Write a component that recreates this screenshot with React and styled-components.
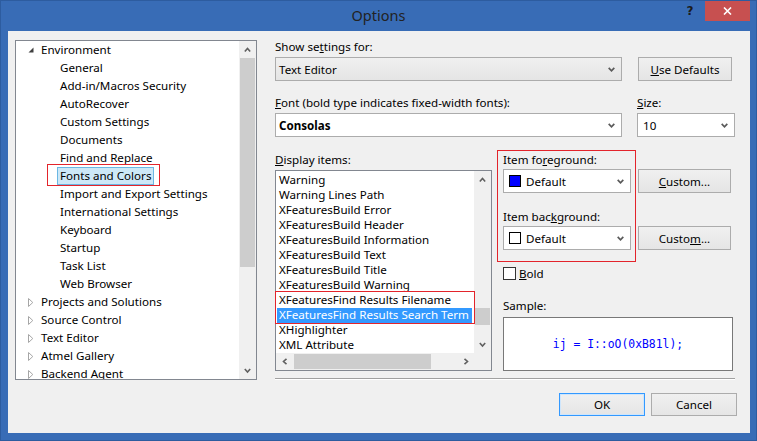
import React from 'react';
import styled, { createGlobalStyle } from 'styled-components';

const GlobalStyle = createGlobalStyle`
  html, body { margin: 0; padding: 0; background: #386cb6; }
  body { font-family: "Noto Sans", "Open Sans", sans-serif; font-size: 11.6px; color: #000; }
  * { box-sizing: border-box; }
`;

const Window = styled.div`
  width: 757px;
  height: 441px;
  background: #386cb6;
  border: 1px solid #2d5c9f;
  display: flex;
  flex-direction: column;
`;

const TitleBar = styled.div`
  height: 30px;
  display: grid;
  grid-template-columns: 1fr auto 1fr;
  align-items: start;
`;

const Title = styled.div`
  grid-column: 2;
  font-size: 14.5px;
  line-height: 28px;
  color: #222;
`;

const TitleControls = styled.div`
  grid-column: 3;
  display: flex;
  justify-content: flex-end;
  align-items: flex-start;
`;

const HelpGlyph = styled.div`
  width: 14px;
  height: 21px;
  line-height: 21px;
  text-align: center;
  font-family: "DejaVu Sans", sans-serif;
  font-weight: bold;
  font-size: 12px;
  color: #1c1c1c;
  margin-right: 8px;
`;

const CloseButton = styled.div`
  width: 45px;
  height: 20px;
  margin-right: 6px;
  background: #c75050;
  display: flex;
  align-items: center;
  justify-content: center;
`;

const Client = styled.div`
  flex: 1;
  margin: 0 6px 7px 7px;
  background: #f0f0f0;
  display: flex;
  align-items: flex-start;
  padding: 8px 0 0 7px;
`;

/* ---------- Tree ---------- */
const TreeBox = styled.div`
  margin-top: 1px;
  width: 242px;
  height: 340px;
  border: 1px solid #828790;
  background: #fff;
  display: flex;
`;

const TreeContent = styled.div`
  flex: 1;
  overflow: hidden;
  position: relative;
`;

const TreeRow = styled.div`
  height: 18px;
  display: flex;
  align-items: center;
  padding-left: ${p => (p.$level ? 41 : 10)}px;
  white-space: nowrap;
`;

const Expander = styled.span`
  width: 12px;
  height: 18px;
  display: flex;
  align-items: center;
  padding-left: 2px;
`;

const TreeLabel = styled.span`
  position: relative;
  height: 18px;
  line-height: 16px;
  padding: 0 2px;
  border: 1px solid ${p => (p.$selected ? '#6bb7e3' : 'transparent')};
  background: ${p => (p.$selected ? '#cde8f7' : 'transparent')};
  ${p => p.$annotated && `
    &::after {
      content: '';
      position: absolute;
      top: -4px; bottom: -2px; left: -11px; right: -7px;
      border: 1px solid #e3242b;
    }
  `}
`;

/* ---------- Scrollbars ---------- */
const VScroll = styled.div`
  width: 17px;
  background: #f0f0f0;
  display: flex;
  flex-direction: column;
`;

const HScroll = styled.div`
  height: 17px;
  background: #f0f0f0;
  display: flex;
`;

const ArrowCell = styled.div`
  width: 17px;
  height: 17px;
  flex: none;
  display: flex;
  align-items: center;
  justify-content: center;
`;

const Track = styled.div`
  flex: 1;
  display: flex;
  flex-direction: ${p => (p.$horizontal ? 'row' : 'column')};
`;

const Thumb = styled.div`
  background: #cdcdcd;
  ${p => p.$horizontal
    ? `height: 15px; margin: 1px 0;`
    : `width: 15px; margin: 0 1px;`}
`;

const Corner = styled.div`
  background: #f0f0f0;
`;

function Chevron({ dir }) {
  const pts = {
    up: '0.8,4.5 3.5,1.5 6.2,4.5',
    down: '0.8,1 3.5,4 6.2,1',
    left: '4.5,0.8 1.5,3.5 4.5,6.2',
    right: '1.5,0.8 4.5,3.5 1.5,6.2',
  }[dir];
  const horiz = dir === 'left' || dir === 'right';
  return (
    <svg width={horiz ? 6 : 7} height={horiz ? 7 : 6} viewBox={horiz ? '0 0 6 7' : '0 0 7 6'}>
      <polyline points={pts} fill="none" stroke="#606060" strokeWidth="1.6" />
    </svg>
  );
}

function VScrollbar({ offset, size }) {
  return (
    <VScroll>
      <ArrowCell><Chevron dir="up" /></ArrowCell>
      <Track>
        <Thumb style={{ marginTop: offset, height: size }} />
      </Track>
      <ArrowCell><Chevron dir="down" /></ArrowCell>
    </VScroll>
  );
}

/* ---------- Right side ---------- */
const RightColumn = styled.div`
  margin-left: 18px;
  width: 462px;
  display: flex;
  flex-direction: column;
`;

const Label = styled.div`
  height: 16px;
  line-height: 16px;
  white-space: nowrap;
  margin-top: ${p => p.$mt || 0}px;
  padding-left: ${p => p.$pl || 0}px;
`;

const Row = styled.div`
  display: flex;
  align-items: flex-start;
  gap: ${p => p.$gap || 0}px;
  margin-top: ${p => p.$mt || 0}px;
`;

const FieldGrid = styled.div`
  display: grid;
  grid-template-columns: 347px 98px;
  column-gap: 15px;
  row-gap: 2px;
  margin-top: ${p => p.$mt || 0}px;
`;

const Combo = styled.div`
  width: ${p => (p.$w ? `${p.$w}px` : '100%')};
  height: 24px;
  flex: none;
  border: 1px solid #acacac;
  background: ${p => (p.$flat ? 'linear-gradient(#f0f0f0, #e5e5e5)' : '#fff')};
  display: flex;
  align-items: center;
  padding-left: ${p => p.$pl ?? 3}px;
  padding-right: 6px;
  margin-top: ${p => p.$mt || 0}px;
`;

const ComboText = styled.span`
  flex: 1;
  font-weight: ${p => (p.$bold ? 700 : 400)};
  white-space: nowrap;
`;

const Swatch = styled.span`
  width: 12px;
  height: 12px;
  border: 1px solid #000;
  background: ${p => p.$color};
  margin-right: 5px;
  flex: none;
`;

function ComboChevron() {
  return (
    <svg width="7" height="5" viewBox="0 0 7 5">
      <polyline points="0.7,0.9 3.5,3.8 6.3,0.9" fill="none" stroke="#5a5a5a" strokeWidth="1.7" />
    </svg>
  );
}

const Button = styled.div`
  width: ${p => p.$w}px;
  height: ${p => p.$h || 24}px;
  flex: none;
  border: 1px solid ${p => (p.$default ? '#3399ff' : '#acacac')};
  ${p => p.$default && 'box-shadow: inset 0 0 0 1px #cfe6fc;'}
  background: linear-gradient(#f0f0f0, #e5e5e5);
  display: flex;
  align-items: center;
  justify-content: center;
  white-space: nowrap;
`;

const BlockB = styled.div`
  display: flex;
  margin-top: 13px;
`;

const ListColumn = styled.div`
  width: 217px;
  padding-top: 2px;
`;

const ListBox = styled.div`
  margin-top: 2px;
  height: 201px;
  border: 1px solid #828790;
  background: #fff;
  display: grid;
  grid-template-columns: 1fr 17px;
  grid-template-rows: 1fr 17px;
`;

const ListContent = styled.div`
  padding-top: 2px;
  position: relative;
`;

const ListItem = styled.div`
  height: 15px;
  line-height: 14px;
  padding-left: 2px;
  margin: 0 2px 0 1px;
  white-space: nowrap;
  background: ${p => (p.$selected ? '#3399ff' : 'transparent')};
  color: ${p => (p.$selected ? '#fff' : '#000')};
`;

const AnnotatedGroup = styled.div`
  position: relative;
  &::after {
    content: '';
    position: absolute;
    top: -2px; bottom: -1px; left: -1px; right: -1px;
    border: 1px solid #e3242b;
    z-index: 2;
    pointer-events: none;
  }
`;

const ColorColumn = styled.div`
  margin-left: 5px;
  flex: 1;
  display: flex;
  flex-direction: column;
`;

const ColorGroup = styled.div`
  width: 139px;
  height: 112px;
  border: 1px solid #e3242b;
  padding: 1px 4px 0 5px;
`;

const ButtonStack = styled.div`
  margin-left: 2px;
  padding-top: 19px;
  display: flex;
  flex-direction: column;
  gap: 33px;
`;

const CheckRow = styled.div`
  margin-top: 3px;
  height: 16px;
  display: flex;
  align-items: center;
  padding-left: 6px;
`;

const CheckBox = styled.span`
  width: 13px;
  height: 13px;
  border: 1px solid #333;
  background: #fff;
  margin-right: 3px;
`;

const SampleBox = styled.div`
  margin: 3px 0 0 6px;
  width: 230px;
  height: 54px;
  border: 1px solid #787878;
  background: #fff;
  display: flex;
  align-items: center;
  justify-content: center;
  font-family: "DejaVu Sans Mono", "Liberation Mono", monospace;
  font-size: 11.4px;
  color: #0000ff;
  white-space: pre;
`;

const Separator = styled.div`
  margin-top: 7px;
  width: 460px;
  border-top: 1px solid #a0a0a0;
  border-bottom: 1px solid #fff;
`;

const DialogButtons = styled.div`
  margin-top: 13px;
  display: flex;
  justify-content: flex-end;
  gap: 6px;
`;

const treeItems = [
  { label: 'Environment', level: 0, expanded: true },
  { label: 'General', level: 1 },
  { label: 'Add-in/Macros Security', level: 1 },
  { label: 'AutoRecover', level: 1 },
  { label: 'Custom Settings', level: 1 },
  { label: 'Documents', level: 1 },
  { label: 'Find and Replace', level: 1 },
  { label: 'Fonts and Colors', level: 1, selected: true },
  { label: 'Import and Export Settings', level: 1 },
  { label: 'International Settings', level: 1 },
  { label: 'Keyboard', level: 1 },
  { label: 'Startup', level: 1 },
  { label: 'Task List', level: 1 },
  { label: 'Web Browser', level: 1 },
  { label: 'Projects and Solutions', level: 0 },
  { label: 'Source Control', level: 0 },
  { label: 'Text Editor', level: 0 },
  { label: 'Atmel Gallery', level: 0 },
  { label: 'Backend Agent', level: 0 },
];

const displayItems = [
  'Warning',
  'Warning Lines Path',
  'XFeaturesBuild Error',
  'XFeaturesBuild Header',
  'XFeaturesBuild Information',
  'XFeaturesBuild Text',
  'XFeaturesBuild Title',
  'XFeaturesBuild Warning',
];

function ExpandIcon({ expanded }) {
  if (expanded) {
    return (
      <svg width="6" height="6" viewBox="0 0 6 6">
        <polygon points="5.5,0.5 5.5,5.5 0.5,5.5" fill="#404040" />
      </svg>
    );
  }
  return (
    <svg width="6" height="9" viewBox="0 0 6 9">
      <polygon points="0.5,0.5 4.8,4.5 0.5,8.5" fill="none" stroke="#a6a6a6" strokeWidth="1" />
    </svg>
  );
}

export default function App() {
  return (
    <>
      <GlobalStyle />
      <Window>
        <TitleBar>
          <Title>Options</Title>
          <TitleControls>
            <HelpGlyph>?</HelpGlyph>
            <CloseButton>
              <svg width="9" height="8" viewBox="0 0 9 8">
                <path d="M1 0.5 L8 7.5 M8 0.5 L1 7.5" stroke="#fff" strokeWidth="1.6" />
              </svg>
            </CloseButton>
          </TitleControls>
        </TitleBar>

        <Client>
          <TreeBox>
            <TreeContent>
              {treeItems.map(item => (
                <TreeRow key={item.label} $level={item.level}>
                  {item.level === 0 && (
                    <Expander><ExpandIcon expanded={item.expanded} /></Expander>
                  )}
                  <TreeLabel $selected={item.selected} $annotated={item.selected}>
                    {item.label}
                  </TreeLabel>
                </TreeRow>
              ))}
            </TreeContent>
            <VScrollbar offset={0} size={209} />
          </TreeBox>

          <RightColumn>
            <Label>Show se<u>t</u>tings for:</Label>
            <Row $gap={16} $mt={2}>
              <Combo $w={347} $flat>
                <ComboText>Text Editor</ComboText>
                <ComboChevron />
              </Combo>
              <Button $w={94}><span><u>U</u>se Defaults</span></Button>
            </Row>

            <FieldGrid $mt={14}>
              <Label><u>F</u>ont (bold type indicates fixed-width fonts):</Label>
              <Label><u>S</u>ize:</Label>
              <Combo>
                <ComboText $bold>Consolas</ComboText>
                <ComboChevron />
              </Combo>
              <Combo $pl={5}>
                <ComboText>10</ComboText>
                <ComboChevron />
              </Combo>
            </FieldGrid>

            <BlockB>
              <ListColumn>
                <Label><u>D</u>isplay items:</Label>
                <ListBox>
                  <ListContent>
                    {displayItems.map(t => <ListItem key={t}>{t}</ListItem>)}
                    <AnnotatedGroup>
                      <ListItem>XFeaturesFind Results Filename</ListItem>
                      <ListItem $selected>XFeaturesFind Results Search Term</ListItem>
                    </AnnotatedGroup>
                    <ListItem>XHighlighter</ListItem>
                    <ListItem>XML Attribute</ListItem>
                  </ListContent>
                  <VScrollbar offset={120} size={17} />
                  <HScroll>
                    <ArrowCell><Chevron dir="left" /></ArrowCell>
                    <Track $horizontal>
                      <Thumb $horizontal style={{ marginLeft: 1, width: 137 }} />
                    </Track>
                    <ArrowCell><Chevron dir="right" /></ArrowCell>
                  </HScroll>
                  <Corner />
                </ListBox>
              </ListColumn>

              <ColorColumn>
                <Row>
                  <ColorGroup>
                    <Label>Item fo<u>r</u>eground:</Label>
                    <Combo $mt={1} $pl={5}>
                      <Swatch $color="#0000ff" />
                      <ComboText>Default</ComboText>
                      <ComboChevron />
                    </Combo>
                    <Label $mt={16}>Item bac<u>k</u>ground:</Label>
                    <Combo $mt={1} $pl={5}>
                      <Swatch $color="#ffffff" />
                      <ComboText>Default</ComboText>
                      <ComboChevron />
                    </Combo>
                  </ColorGroup>
                  <ButtonStack>
                    <Button $w={93}><span><u>C</u>ustom...</span></Button>
                    <Button $w={93}><span>Custo<u>m</u>...</span></Button>
                  </ButtonStack>
                </Row>
                <CheckRow>
                  <CheckBox />
                  <span><u>B</u>old</span>
                </CheckRow>
                <Label $mt={17} $pl={6}>Sample:</Label>
                <SampleBox>ij = I::oO(0xB81l);</SampleBox>
              </ColorColumn>
            </BlockB>

            <Separator />
            <DialogButtons>
              <Button $w={86} $h={23} $default>OK</Button>
              <Button $w={86} $h={23}>Cancel</Button>
            </DialogButtons>
          </RightColumn>
        </Client>
      </Window>
    </>
  );
}
